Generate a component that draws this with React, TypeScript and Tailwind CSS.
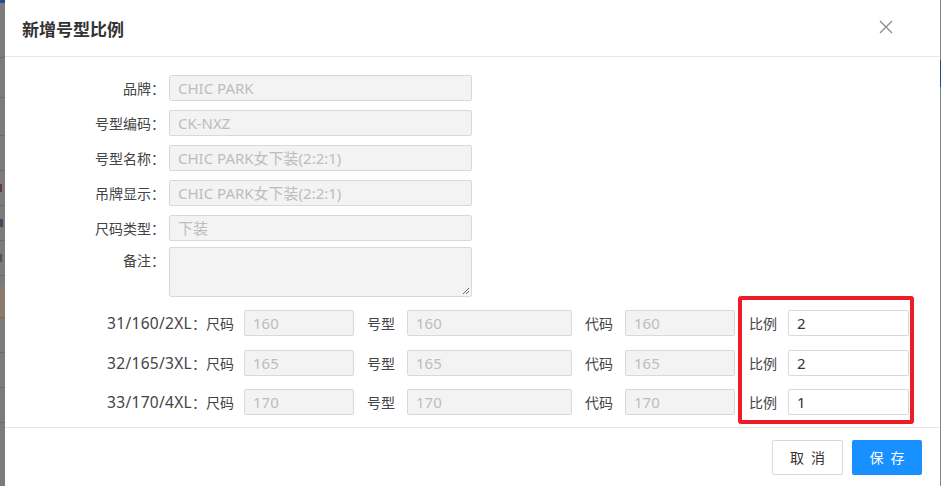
import React from "react";

const FONT = { fontFamily: '"Noto Sans", "Noto Sans CJK SC", sans-serif' };
const CJK = { fontFamily: '"Noto Sans CJK SC", sans-serif' };

const formRows: { label: string; value: string }[] = [
  { label: "品牌：", value: "CHIC PARK" },
  { label: "号型编码：", value: "CK-NXZ" },
  { label: "号型名称：", value: "CHIC PARK女下装(2:2:1)" },
  { label: "吊牌显示：", value: "CHIC PARK女下装(2:2:1)" },
  { label: "尺码类型：", value: "下装" },
];

const sizeRows = [
  { code: "31/160/2XL", v: "160", ratio: "2", mt: "mt-[13px]" },
  { code: "32/165/3XL", v: "165", ratio: "2", mt: "mt-[14px]" },
  { code: "33/170/4XL", v: "170", ratio: "1", mt: "mt-[13px]" },
];

function Disabled({ value, w }: { value: string; w: string }) {
  return (
    <div
      className={`${w} h-[26px] shrink-0 border border-[#d9d9d9] bg-[#f3f3f3] rounded-[2px] pl-[8px] flex items-center text-[15px] text-[#bdbdbd] leading-none whitespace-nowrap`}
    >
      {value}
    </div>
  );
}

export default function App() {
  return (
    <div className="flex w-[941px] h-[486px] overflow-hidden bg-[#7d7d7d]" style={FONT}>
      {/* dimmed page behind, left edge */}
      <div className="w-[5px] h-full shrink-0 flex flex-col bg-[#7b7b7b]">
        <div className="h-[3px] bg-[#1f4e8c]" />
        <div className="h-[55px] border-b border-[#6a6a6a]" />
        <div className="h-[40px] border-b border-[#6a6a6a]" />
        <div className="h-[38px] border-b border-[#6a6a6a]" />
        <div className="h-[35px] border-b border-[#6a6a6a]" />
        <div className="h-[35px] border-b border-[#6a6a6a] flex items-center"><div className="w-[2px] h-[8px] bg-[#5a3a55]" /></div>
        <div className="h-[35px] border-b border-[#6a6a6a] flex items-center"><div className="w-[3px] h-[8px] bg-[#3e4b5e]" /></div>
        <div className="h-[35px] border-b border-[#6a6a6a] flex items-center"><div className="w-[2px] h-[8px] bg-[#4c5560]" /></div>
        <div className="h-[10px]" />
        <div className="h-[32px] bg-[#8a7b6c] border-b border-[#6a6a6a]" />
        <div className="h-[35px] border-b border-[#6a6a6a]" />
        <div className="h-[35px] border-b border-[#6a6a6a]" />
        <div className="h-[35px] border-b border-[#6a6a6a]" />
        <div className="flex-1" />
      </div>

      {/* modal */}
      <div className="relative w-[935px] h-full shrink-0 bg-white flex flex-col">
        <div className="h-[57px] shrink-0 border-b border-[#e8e8e8] flex items-center justify-between pl-[17px] pr-[47px]">
          <div className="text-[17px] font-bold text-[#333] leading-none" style={CJK}>
            新增号型比例
          </div>
          <svg width="14" height="14" viewBox="0 0 14 14" className="mb-[2px]">
            <path d="M1 1 L13 13 M13 1 L1 13" stroke="#8a8a8a" strokeWidth="1.3" fill="none" />
          </svg>
        </div>

        <div className="flex flex-col pt-[18px] h-[371px] shrink-0 border-b border-[#e8e8e8]">
          {formRows.map((r, i) => (
            <div key={r.label} className={`flex items-center h-[26px] ${i > 0 ? "mt-[9px]" : ""}`}>
              <div className="w-[160px] shrink-0 text-right text-[14px] text-[#444] whitespace-nowrap" style={CJK}>
                {r.label}
              </div>
              <div className="ml-[4px]">
                <Disabled value={r.value} w="w-[303px]" />
              </div>
            </div>
          ))}
          <div className="flex mt-[6px]">
            <div className="w-[160px] shrink-0 text-right text-[14px] text-[#444] pt-[3px]" style={CJK}>
              备注：
            </div>
            <div className="ml-[4px] relative w-[303px] h-[50px] border border-[#d9d9d9] bg-[#f3f3f3] rounded-[2px]">
              <svg width="8" height="8" viewBox="0 0 8 8" className="absolute right-[1px] bottom-[1px]">
                <path d="M7 1 L1 7 M7 4 L4 7" stroke="#555" strokeWidth="0.9" fill="none" />
              </svg>
            </div>
          </div>

          {sizeRows.map((r) => (
            <div key={r.code} className={`flex items-center h-[26px] ${r.mt}`}>
              <div className="w-[229px] shrink-0 text-right text-[#444] whitespace-nowrap">
                <span className="text-[15.5px] tracking-[0.3px]">{r.code}</span>
                <span className="text-[14px]" style={CJK}>：尺码</span>
              </div>
              <div className="ml-[10px]"><Disabled value={r.v} w="w-[110px]" /></div>
              <div className="ml-[13px] w-[31px] text-[14px] text-[#444]" style={CJK}>号型</div>
              <div className="ml-[9px]"><Disabled value={r.v} w="w-[165px]" /></div>
              <div className="ml-[13px] w-[31px] text-[14px] text-[#444]" style={CJK}>代码</div>
              <div className="ml-[9px]"><Disabled value={r.v} w="w-[110px]" /></div>
              <div className="ml-[14px] w-[30px] text-[14px] text-[#444]" style={CJK}>比例</div>
              <div className="ml-[9px] w-[121px] h-[26px] border border-[#d9d9d9] bg-white rounded-[2px] pl-[8px] flex items-center text-[15px] text-[#333] leading-none">
                {r.ratio}
              </div>
            </div>
          ))}
        </div>

        <div className="flex justify-end gap-[9px] pt-[12px] pr-[18px]">
          <button className="w-[71px] h-[35px] border border-[#d9d9d9] bg-white rounded-[2px] text-[14px] text-[#333] tracking-[7px] pl-[7px]" style={CJK}>
            取消
          </button>
          <button className="w-[70px] h-[35px] bg-[#1890ff] rounded-[2px] text-[14px] text-white tracking-[7px] pl-[7px]" style={CJK}>
            保存
          </button>
        </div>

        {/* red annotation box */}
        <div className="absolute left-[733px] top-[296px] w-[176px] h-[128px] border-[4px] border-[#ee1d25] rounded-[3px] pointer-events-none" />
      </div>

      {/* right edge */}
      <div className="w-[1px] h-full shrink-0 flex flex-col bg-[#888]">
        <div className="h-[60px]" />
        <div className="h-[27px] bg-[#1f4e8c]" />
      </div>
    </div>
  );
}
